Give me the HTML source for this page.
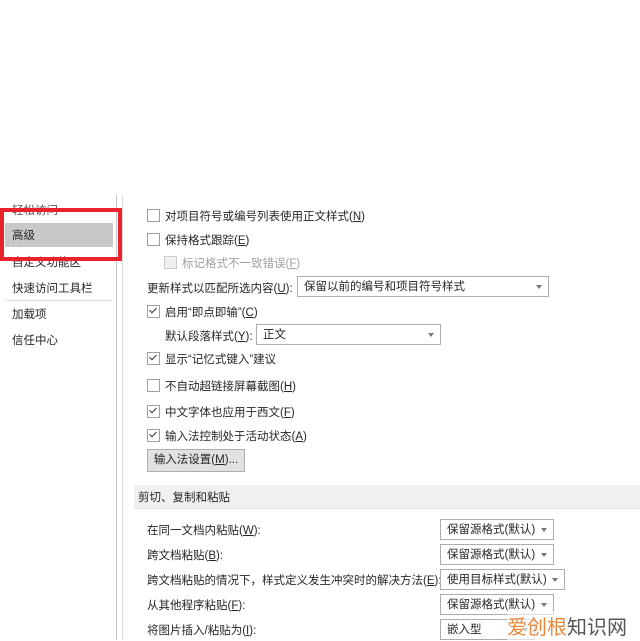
<!DOCTYPE html>
<html><head><meta charset="utf-8"><style>
body{margin:0;width:640px;height:640px;background:#fff;position:relative;overflow:hidden;font-family:"Liberation Sans","Noto Sans CJK SC",sans-serif;font-size:11.5px;color:#262626}
.a{position:absolute;white-space:nowrap}
.cb{position:absolute;width:11px;height:11px;border:1px solid #a0a0a0;background:#fff}
.cb.on::after{content:"";position:absolute;left:3px;top:0px;width:3px;height:6px;border:solid #333;border-width:0 1.3px 1.3px 0;transform:rotate(45deg)}
.dd{position:absolute;border:1px solid #abadb3;background:#fff;height:19px;box-sizing:content-box;line-height:21px;padding-left:6px}
.dd::after{content:"";position:absolute;right:6px;top:8px;border:3px solid transparent;border-top:4px solid #777}
</style></head><body>
<div class="a" style="left:116px;top:195px;width:1px;height:445px;background:#c6c6c6"></div>
<div class="a" style="left:122px;top:195px;width:1px;height:445px;background:#dcdcdc"></div>
<div class="a" style="left:12px;top:202px;color:#555">轻松访问</div>
<div class="a" style="left:5px;top:223px;width:108px;height:24px;background:#c8c8c8"></div>
<div class="a" style="left:12px;top:227px">高级</div>
<div class="a" style="left:12px;top:254px">自定义功能区</div>
<div class="a" style="left:0;top:208px;width:114px;height:45px;border:4px solid #e8232e"></div>
<div class="a" style="left:12px;top:280px">快速访问工具栏</div>
<div class="a" style="left:5px;top:300px;width:107px;height:1px;background:#dcdcdc"></div>
<div class="a" style="left:12px;top:306px">加载项</div>
<div class="a" style="left:12px;top:332px">信任中心</div>

<div class="cb" style="left:147px;top:209px"></div><div class="a" style="left:165px;top:208px">对项目符号或编号列表使用正文样式(<u>N</u>)</div>
<div class="cb" style="left:147px;top:233px"></div><div class="a" style="left:165px;top:232px">保持格式跟踪(<u>E</u>)</div>
<div class="cb" style="left:164px;top:256px;background:#f0f0f0;border-color:#ccc"></div><div class="a" style="left:182px;top:255px;color:#a0a0a0">标记格式不一致错误(<u>F</u>)</div>
<div class="a" style="left:147px;top:280px">更新样式以匹配所选内容(<u>U</u>):</div>
<div class="dd" style="left:297px;top:276px;width:244px">保留以前的编号和项目符号样式</div>
<div class="cb on" style="left:147px;top:305px"></div><div class="a" style="left:165px;top:304px">启用“即点即输”(<u>C</u>)</div>
<div class="a" style="left:165px;top:328px">默认段落样式(<u>Y</u>):</div>
<div class="dd" style="left:256px;top:324px;width:177px">正文</div>
<div class="cb on" style="left:147px;top:352px"></div><div class="a" style="left:165px;top:351px">显示“记忆式键入”建议</div>
<div class="cb" style="left:147px;top:379px"></div><div class="a" style="left:165px;top:378px">不自动超链接屏幕截图(<u>H</u>)</div>
<div class="cb on" style="left:147px;top:405px"></div><div class="a" style="left:165px;top:404px">中文字体也应用于西文(<u>F</u>)</div>
<div class="cb on" style="left:147px;top:429px"></div><div class="a" style="left:165px;top:428px">输入法控制处于活动状态(<u>A</u>)</div>
<div class="a" style="left:147px;top:449px;width:96px;height:21px;border:1px solid #adadad;background:#e1e1e1;text-align:center;line-height:21px">输入法设置(<u>M</u>)...</div>
<div class="a" style="left:134px;top:485px;width:506px;height:23px;background:#f0f0f0;border-bottom:1px solid #e3e3e3"></div>
<div class="a" style="left:138px;top:489px">剪切、复制和粘贴</div>
<div class="a" style="left:147px;top:522px">在同一文档内粘贴(<u>W</u>):</div><div class="dd" style="left:440px;top:519px;width:106px">保留源格式(默认)</div>
<div class="a" style="left:147px;top:547px">跨文档粘贴(<u>B</u>):</div><div class="dd" style="left:440px;top:544px;width:106px">保留源格式(默认)</div>
<div class="a" style="left:147px;top:572px">跨文档粘贴的情况下，样式定义发生冲突时的解决方法(<u>E</u>):</div><div class="dd" style="left:440px;top:569px;width:117px">使用目标样式(默认)</div>
<div class="a" style="left:147px;top:597px">从其他程序粘贴(<u>F</u>):</div><div class="dd" style="left:440px;top:594px;width:106px">保留源格式(默认)</div>
<div class="a" style="left:147px;top:622px">将图片插入/粘贴为(<u>I</u>):</div><div class="dd" style="left:440px;top:619px;width:87px">嵌入型</div>
<div class="a" style="left:507px;top:611px;font-size:20px;color:#e8883a;background:rgba(255,255,255,.6)">爱创根<span style="color:#555">知识网</span></div>
</body></html>
